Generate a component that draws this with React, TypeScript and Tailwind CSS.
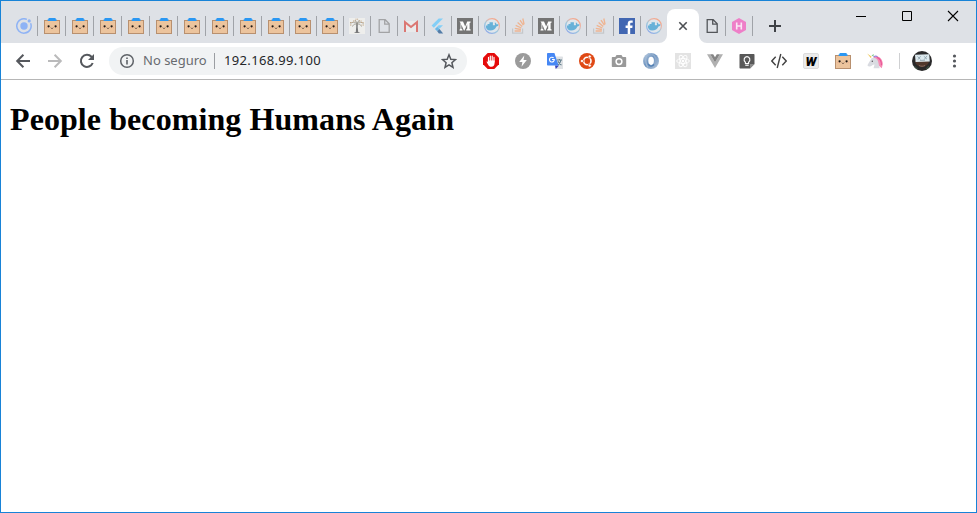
import React from "react";

type IconProps = { className?: string };

const Svg = ({ children, className = "", box = "0 0 16 16" }: { children: React.ReactNode; className?: string; box?: string }) => (
  <svg viewBox={box} className={`shrink-0 ${className || "h-4 w-4"}`} fill="none">
    {children}
  </svg>
);

const IonicIcon = () => (
  <Svg>
    <path d="M10.9 1.4A7.2 7.2 0 1 0 14.6 5.2" stroke="#8fb3f5" strokeWidth="1.5" />
    <circle cx="8" cy="8" r="3.7" fill="#8fb3f5" />
    <circle cx="13.2" cy="2.9" r="1.6" fill="#8fb3f5" />
  </Svg>
);

const BoxIcon = () => (
  <Svg>
    <rect x="0.5" y="2.5" width="15" height="13" fill="#ecc49d" stroke="#b8906f" />
    <path d="M4.6 0h7v1.2h.9V3H3.7V1.2h.9z" fill="#2a97f2" />
    <circle cx="4.6" cy="8.3" r="1.1" fill="#1d1715" />
    <circle cx="11.6" cy="8.3" r="1.1" fill="#1d1715" />
    <path d="M7 9.7l1 1 1-1" stroke="#4a342b" strokeWidth="0.9" />
    <path d="M2.3 9.6h1.3M12.5 9.6h1.3" stroke="#eba58d" strokeWidth="0.8" />
  </Svg>
);

const TreeIcon = () => (
  <Svg>
    <rect width="16" height="16" fill="#eeeeec" />
    <path d="M7.2 5h1.7l-.2 4 .5 5 2.2 1H4.8l2-1 .4-5z" fill="#77787a" />
    <path d="M8 6C6 3.5 3.5 4 1.5 5.5M8 7C6 5 4.5 6.5 3.5 8.5M8 6c2-2.5 4.5-2 6.5-.5M8 7c2-2 3.5-.5 4.5 1.5M8 5L6 2M8 5l2.5-3" stroke="#9a978f" strokeWidth=".9" />
    <path d="M1 4.5h3M4 3h3M6.5 1.2h3M10 3h3M12 4.5h3M1 7h2M12.5 7h2.5" stroke="#c2a685" strokeWidth="1" strokeDasharray="1 .6" />
  </Svg>
);

const PageIcon = ({ dark = false }: { dark?: boolean }) => (
  <Svg>
    <path d="M3.2 1.7h6l4 4v8.6h-10z M8.7 1.7v4.5h4.5" stroke={dark ? "#53565a" : "#a2a3a5"} strokeWidth="1.3" />
  </Svg>
);

const GmailIcon = () => (
  <Svg>
    <path d="M1 3h14v11H1z" fill="#e9eaeb" />
    <path d="M2 14V4.2L8 9l6-4.8V14" stroke="#db7773" strokeWidth="2" />
  </Svg>
);

const FlutterIcon = () => (
  <Svg>
    <path d="M8.7 .5H13L3.8 9.8 1.6 7.6z" fill="#83cff7" />
    <path d="M8.7 7.2H13L9.4 10.8 7.1 8.7z" fill="#83cff7" />
    <path d="M4.9 11l2.3-2.3 2.3 2.2-2.3 2.4z" fill="#6bb9e8" />
    <path d="M7.2 13.3l2.3-2.4 3.7 4.7H8.9z" fill="#527ca7" />
  </Svg>
);

const MediumIcon = () => (
  <Svg>
    <rect width="16" height="16" fill="#747474" />
    <path d="M2.5 3.4H6l2.2 5.2 2-5.2h3.4v1l-1 .7v5.8l1 .7v.9H9.2v-.9l1-.8V6.2l-2.7 6.3h-.6L4.3 6.4v4.2l1.2 1.2v.7h-3v-.7l1-1.2V5z" fill="#fff" />
  </Svg>
);

const DockerIcon = () => (
  <Svg>
    <defs>
      <linearGradient id="docker-ring" x1=".9" y1="0" x2=".2" y2="1">
        <stop offset="0" stopColor="#f5a07d" />
        <stop offset=".3" stopColor="#eeb3a3" />
        <stop offset=".6" stopColor="#9cc9df" />
        <stop offset="1" stopColor="#8fa8e8" />
      </linearGradient>
    </defs>
    <circle cx="8" cy="8" r="7.4" fill="#dfe6ec" stroke="url(#docker-ring)" strokeWidth="1.2" />
    <path d="M1.8 7.4h1.7V5.9h2V4.3h3.4v3h1.9c.4-.8.3-1.6-.2-2.3l.6-.6c.9.5 1.3 1.2 1.4 2 .9-.1 1.5 0 2 .4-.4 1-1.2 1.5-2.2 1.6-1 2.7-3.1 4-6.3 4-2.8 0-4.3-1.5-4.3-5z" fill="#67b1d8" />
  </Svg>
);

const StackIcon = () => (
  <Svg>
    <path d="M1.6 10.5v4.7h10v-4.7" stroke="#c5c7ca" strokeWidth="1.2" />
    <path d="M3.6 13h6.2M3.8 10.3l6.1 1.2M4.7 7.4l5.7 2.6M6.6 4.6l4.6 4M9 2.2l3.4 5M11.8.5l1.3 5.8" stroke="#efb491" strokeWidth="1.3" />
  </Svg>
);

const FacebookIcon = () => (
  <Svg>
    <rect width="16" height="16" fill="#4267b2" />
    <path d="M8.7 16v-6.1H6.6V7.4h2.1V5.7c0-2.1 1.2-3.3 3.1-3.3.9 0 1.6.1 1.9.1v2.2h-1.3c-1 0-1.2.5-1.2 1.2v1.5h2.4l-.3 2.5h-2.1V16z" fill="#fff" />
  </Svg>
);

const HexIcon = () => (
  <Svg>
    <path d="M8 0l7 4v8l-7 4-7-4V4z" fill="#ee7fc8" />
    <path d="M5.7 4.5v7M10.3 4.5v7M5.7 8h4.6" stroke="#fbe6f5" strokeWidth="1.6" />
  </Svg>
);

const Tab = ({ children, wide = false, divider = true }: { children: React.ReactNode; wide?: boolean; divider?: boolean }) => (
  <div className={`flex h-5 shrink-0 items-center border-r ${divider ? "border-[#a0a3a8]" : "border-transparent"} ${wide ? "w-7 pl-1.5" : "w-[27px] pl-[5px]"}`}>
    {children}
  </div>
);

const ActiveTab = () => (
  <div className="relative -ml-px flex h-[34px] w-8 shrink-0 items-center justify-center rounded-t-lg bg-white">
    <svg className="absolute bottom-0 -left-2 h-2 w-2" viewBox="0 0 8 8"><path d="M8 0v8H0a8 8 0 0 0 8-8" fill="#fff" /></svg>
    <svg className="absolute bottom-0 -right-2 h-2 w-2" viewBox="0 0 8 8"><path d="M0 0v8h8a8 8 0 0 1-8-8" fill="#fff" /></svg>
    <Svg className="h-4 w-4"><path d="M4.3 4.3l7.4 7.4M11.7 4.3l-7.4 7.4" stroke="#4c4f53" strokeWidth="1.6" /></Svg>
  </div>
);

const wideTabs = Array.from({ length: 9 });
const narrowTabs = [BoxIcon, BoxIcon, TreeIcon, PageIcon, GmailIcon, FlutterIcon, MediumIcon, DockerIcon, StackIcon, MediumIcon, DockerIcon, StackIcon, FacebookIcon];

const TabStrip = () => (
  <div className="flex h-[42px] bg-[#dee1e6] pl-[9px]">
    <div className="flex h-[34px] items-center self-end">
      <Tab wide><IonicIcon /></Tab>
      {wideTabs.map((_, i) => <Tab wide key={i}><BoxIcon /></Tab>)}
      {narrowTabs.map((Icon, i) => <Tab key={i}><Icon /></Tab>)}
      <Tab divider={false}><DockerIcon /></Tab>
      <ActiveTab />
      <Tab><PageIcon dark /></Tab>
      <Tab><HexIcon /></Tab>
      <Svg className="ml-[14px] h-4 w-4"><path d="M8 2v12M2 8h12" stroke="#3f4246" strokeWidth="2" /></Svg>
    </div>
    <div className="ml-auto flex h-[29px]">
      <WindowButton><path d="M3 8.5h10" stroke="#000" /></WindowButton>
      <WindowButton><path d="M3.5 3.5h9v9h-9z" stroke="#000" /></WindowButton>
      <WindowButton><path d="M3 3l10 10M13 3L3 13" stroke="#000" strokeWidth="1.1" /></WindowButton>
    </div>
  </div>
);

const WindowButton = ({ children }: { children: React.ReactNode }) => (
  <div className="flex w-[46px] items-center justify-center"><Svg>{children}</Svg></div>
);

const HandIcon = () => (
  <Svg>
    <path d="M4.7 0h6.6L16 4.7v6.6L11.3 16H4.7L0 11.3V4.7z" fill="#e50b0b" />
    <path d="M5.5 4.3V9M7.3 3v5M9.2 3v5M11 4.2V9" stroke="#fff" strokeWidth="1.15" strokeLinecap="round" />
    <path d="M4.9 7.5h6.7v2.6c0 2.3-1.1 3.7-3.2 3.7-1.6 0-2.6-.7-3.4-2.3L3.5 8.8c.5-.6 1-.4 1.4.2z" fill="#fff" />
  </Svg>
);
const BoltIcon = () => (
  <Svg><circle cx="8" cy="8" r="8" fill="#9b9b9b" /><path d="M9.3 2.5L4.2 9h3.2l-.9 4.7L11.8 7H8.5z" fill="#fff" /></Svg>
);
const TranslateIcon = () => (
  <Svg>
    <path d="M6 3.4h9.2a.8.8 0 0 1 .8.8V16H8.5z" fill="#dfe2e5" />
    <path d="M8 12.6h4L8.8 16z" fill="#3440bf" />
    <path d="M0 .7C0 .3.3 0 .7 0h6.7l4.2 12.6H.8a.8.8 0 0 1-.8-.8z" fill="#4687f4" />
    <path d="M6.7 5A2.4 2.4 0 1 0 7.3 6.5H5" stroke="#fff" strokeWidth="1.1" />
    <path d="M10 7h5M12.4 5.9V7M14 7c-.5 2.5-1.7 4-3 4.9M11 8.3c.7 1.6 2 2.9 3.5 3.8" stroke="#607d8b" strokeWidth="1.1" />
  </Svg>
);
const UbuntuIcon = () => (
  <Svg>
    <circle cx="8" cy="8" r="8" fill="#df4814" />
    <circle cx="8.3" cy="8" r="3.7" stroke="#fff" strokeWidth="1.6" />
    <g fill="#fff" stroke="#df4814" strokeWidth=".7"><circle cx="3" cy="8" r="1.6" /><circle cx="10.7" cy="3.5" r="1.6" /><circle cx="10.7" cy="12.5" r="1.6" /></g>
  </Svg>
);
const CameraIcon = () => (
  <Svg>
    <path d="M5.5 2h5l1.2 2h2.8c.4 0 .7.3.7.7v8.6c0 .4-.3.7-.7.7h-13a.7.7 0 0 1-.7-.7V4.7c0-.4.3-.7.7-.7h2.8z" fill="#999" />
    <circle cx="8" cy="8.6" r="2.9" stroke="#fff" strokeWidth="1.5" />
  </Svg>
);
const SwirlIcon = () => (
  <Svg>
    <defs>
      <linearGradient id="swirl-ring" x1="0" y1="0" x2="1" y2="1">
        <stop stopColor="#c3d2e3" />
        <stop offset=".45" stopColor="#6e94c0" />
        <stop offset="1" stopColor="#b9c9dc" />
      </linearGradient>
    </defs>
    <circle cx="8" cy="8" r="8" fill="url(#swirl-ring)" />
    <path d="M6.5.3C2 2.2 1.6 9.5 5 14.6" stroke="#a3bbd6" strokeWidth="1.2" />
    <path d="M8.5 1.2c4 1.3 5.8 5.8 3.7 9.8" stroke="#8faacb" strokeWidth="1.4" />
    <ellipse cx="8.1" cy="7.8" rx="2.8" ry="4.1" fill="#fff" />
    <path d="M5.4 11.2c1 2.3 3.8 2.6 5.6.3" stroke="#4f7db3" strokeWidth="1.3" />
  </Svg>
);
const ReactIcon = () => (
  <Svg>
    <rect width="16" height="16" fill="#e3e3e3" />
    <g stroke="#fff" strokeWidth=".9"><ellipse cx="8" cy="8" rx="6.3" ry="2.5" /><ellipse cx="8" cy="8" rx="6.3" ry="2.5" transform="rotate(60 8 8)" /><ellipse cx="8" cy="8" rx="6.3" ry="2.5" transform="rotate(120 8 8)" /></g>
    <circle cx="8" cy="8" r="1.2" fill="#fff" />
  </Svg>
);
const VueIcon = () => (
  <Svg><path d="M0 1.3h3.2L8 9.5l4.8-8.2H16L8 15z" fill="#b0b0b0" /><path d="M3.2 1.3h3L8 4.3l1.8-3h3L8 9.5z" fill="#858585" /></Svg>
);
const KeepIcon = () => (
  <Svg>
    <path d="M1.2 1h13.6c.4 0 .7.3.7.7v9.3l-4.5 4.4H1.2a.7.7 0 0 1-.7-.7v-13c0-.4.3-.7.7-.7z" fill="#585858" />
    <path d="M11 15.4V11h4.5z" fill="#8c8c8c" />
    <path d="M6.4 9.2C4 7.4 5.2 3.6 8 3.6s4 3.8 1.6 5.6v1.3H6.4z" stroke="#fff" strokeWidth="1.1" />
    <path d="M6.3 12.2h3.4" stroke="#fff" strokeWidth="1.2" />
  </Svg>
);
const CodeIcon = () => (
  <Svg><path d="M4.7 3.7L.8 8l3.9 4.3M11.3 3.7L15.2 8l-3.9 4.3M9.8 1L6.2 15" stroke="#424242" strokeWidth="1.4" /></Svg>
);
const WIcon = () => (
  <div className="flex h-4 w-4 shrink-0 items-center justify-center rounded-[2px] border border-[#dcdcdc] bg-[#ebebeb] font-['Roboto',sans-serif] text-[13px] leading-none font-black text-black italic">W</div>
);
const UnicornIcon = () => (
  <Svg>
    <path d="M6.5 4.3C10.5 2 15.4 4.3 15.8 11l-1 4.3-4.5-3.8z" fill="#f58db5" />
    <path d="M10 4.2c2.8 1.2 4.6 4 4.5 8" stroke="#ea5596" strokeWidth="1.2" />
    <path d="M4.5 5.2c2.7-1.4 5.5 0 6.5 2.7l1.7 7.4H6.5l1-3.8c-2 .1-3 2-5 2.1C.8 13.6.2 12.7.8 11.6z" fill="#d9dbe1" />
    <path d="M.2.5l4.5 3.3-1 1.2z" fill="#f0c755" />
    <path d="M4.5 2.5L6.8.9l-.4 2.7z" fill="#7cc890" />
    <path d="M6.5 4c1.5-1 3-1 4-.2" stroke="#9b82d8" strokeWidth="1.2" />
    <circle cx="5.3" cy="8.3" r=".7" fill="#4f4a50" />
  </Svg>
);

const Avatar = () => (
  <Svg className="h-5 w-5" box="0 0 20 20">
    <circle cx="10" cy="10" r="10" fill="#29292a" />
    <path d="M3 11a7.5 7.5 0 0 0 14 0l-.6-2H3.6z" fill="#50382d" />
    <path d="M3 3.8l14.2-.6.6 7.4-14.2.5z" fill="#dce9ee" />
    <path d="M5.5 5.5l3 2.8M8.6 5.2L6 8.6M11.8 5.2l3.2 3M15 4.9l-2.8 3.6M8 9.4l5-.2" stroke="#7d929e" strokeWidth=".7" />
    <path d="M7 14.5c2 1 4 1 6 0" stroke="#8a6b5d" />
    <path d="M2.5 15.4l3.2 3M17 15l-3 3.3" stroke="#3d5141" strokeWidth="1.2" />
  </Svg>
);

const extensions: React.ComponentType<IconProps>[] = [HandIcon, BoltIcon, TranslateIcon, UbuntuIcon, CameraIcon, SwirlIcon, ReactIcon, VueIcon, KeepIcon, CodeIcon, WIcon, BoxIcon, UnicornIcon];

const Toolbar = () => (
  <div className="flex h-[37px] items-center border-b border-[#b6b6b6] bg-white pl-[14px]">
    <div className="flex gap-4">
      <Svg><path d="M15 8H2.5M8.4 1.8L2.2 8l6.2 6.2" stroke="#55585d" strokeWidth="2" /></Svg>
      <Svg><path d="M1 8h12.5M7.6 1.8L13.8 8l-6.2 6.2" stroke="#bababb" strokeWidth="2" /></Svg>
      <Svg><path d="M13.7 10A6.1 6.1 0 1 1 12.5 3.7l1 1.1" stroke="#55585d" strokeWidth="2" /><path d="M15 .9v6H9z" fill="#55585d" /></Svg>
    </div>
    <div className="ml-[14px] flex h-7 w-[358px] items-center rounded-full bg-[#f1f3f4] pr-2.5 pl-2.5 font-['Noto_Sans','Open_Sans',sans-serif] text-[13px]">
      <Svg><circle cx="8" cy="8" r="6.3" stroke="#5f6368" strokeWidth="1.5" /><path d="M8 7v4.5M8 4.4V6" stroke="#5f6368" strokeWidth="1.6" /></Svg>
      <span className="ml-2 w-[71px] whitespace-nowrap text-[#686b70]">No seguro</span>
      <span className="h-4 w-px bg-[#9b9ea2]" />
      <span className="ml-[9px] tracking-[0.34px] whitespace-nowrap text-[#242629]">192.168.99.100</span>
      <Svg className="ml-auto h-4 w-4"><path d="M8 1.8l1.8 4.4 4.7.4-3.6 3.1 1.1 4.6-4-2.5-4 2.5 1.1-4.6-3.6-3.1 4.7-.4z" stroke="#55585d" strokeWidth="1.5" /></Svg>
    </div>
    <div className="ml-4 flex gap-4">
      {extensions.map((Icon, i) => <Icon key={i} />)}
    </div>
    <span className="ml-4 h-4 w-px bg-[#cfd0d2]" />
    <div className="ml-3"><Avatar /></div>
    <Svg className="ml-[14px] h-4 w-4"><g fill="#55585d"><circle cx="8.5" cy="3" r="1.6" /><circle cx="8.5" cy="8" r="1.6" /><circle cx="8.5" cy="13" r="1.6" /></g></Svg>
  </div>
);

export default function App() {
  return (
    <div className="flex h-[513px] w-[977px] flex-col overflow-hidden border border-[#1883d7] bg-white">
      <TabStrip />
      <Toolbar />
      <main className="flex-1 px-[9px] pt-[21px]">
        <h1 className="font-['Liberation_Serif','Times_New_Roman',serif] text-[32px] leading-[37px] font-bold tracking-[0.08px] text-black">People becoming Humans Again</h1>
      </main>
    </div>
  );
}
